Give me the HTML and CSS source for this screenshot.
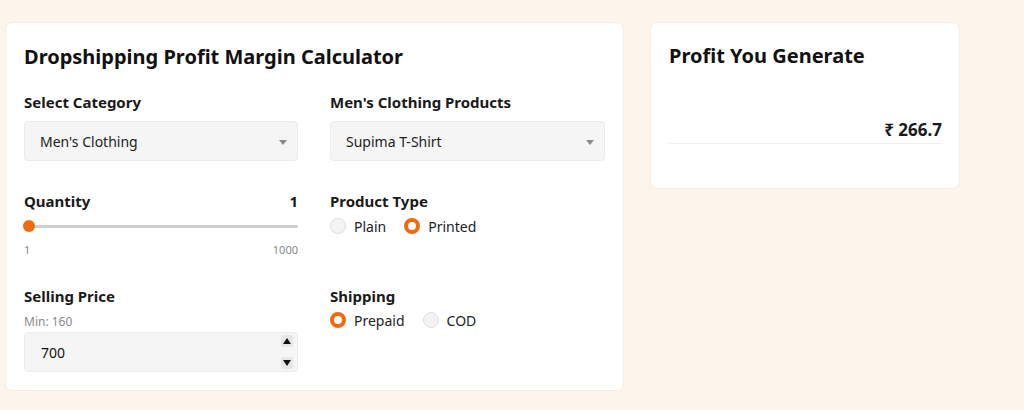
FILE: index.html
```html
<!DOCTYPE html>
<html lang="en">
<head>
<meta charset="utf-8">
<title>Dropshipping Profit Margin Calculator</title>
<link rel="stylesheet" href="styles.css">
</head>
<body>
<main class="page">
  <section class="card calc">
    <h1 class="title">Dropshipping Profit Margin Calculator</h1>
    <div class="grid">
      <div class="field r1 c1">
        <label class="label">Select Category</label>
        <div class="select"><span>Men's Clothing</span><i class="caret"></i></div>
      </div>
      <div class="field r1 c2">
        <label class="label">Men's Clothing Products</label>
        <div class="select"><span>Supima T-Shirt</span><i class="caret"></i></div>
      </div>
      <div class="field r2 c1">
        <div class="label-row"><span class="label">Quantity</span><span class="label">1</span></div>
        <div class="slider"><span class="track"></span><span class="thumb"></span></div>
        <div class="range-ends"><span>1</span><span>1000</span></div>
      </div>
      <div class="field r2 c2">
        <span class="label">Product Type</span>
        <div class="radios">
          <span class="radio"><i class="dot"></i>Plain</span>
          <span class="radio"><i class="dot on"></i>Printed</span>
        </div>
      </div>
      <div class="field r3 c1">
        <span class="label">Selling Price</span>
        <span class="hint">Min: 160</span>
        <div class="number">
          <span>700</span>
          <span class="spin"><i class="btn up"></i><i class="btn down"></i></span>
        </div>
      </div>
      <div class="field r3 c2">
        <span class="label">Shipping</span>
        <div class="radios ship">
          <span class="radio"><i class="dot on"></i>Prepaid</span>
          <span class="radio"><i class="dot"></i>COD</span>
        </div>
      </div>
    </div>
  </section>
  <section class="card result">
    <h2 class="title">Profit You Generate</h2>
    <div class="amount">₹ 266.7</div>
  </section>
</main>
</body>
</html>
```
FILE: styles.css
```css
* { box-sizing: border-box; }
html, body { margin: 0; padding: 0; }
body {
  background: #fdf4eb;
  font-family: "Noto Sans", "DejaVu Sans", sans-serif;
  color: #111;
  height: 410px;
  overflow: hidden;
}
.page {
  display: flex;
  align-items: flex-start;
  gap: 28px;
  padding: 23px 0 0 6px;
}
.card {
  background: #fff;
  border-radius: 6px;
  box-shadow: 0 0 0 1px #f6ece2;
}
.calc {
  width: 617px;
  padding: 20px 18px 18px;
}
.title {
  margin: 0;
  font-size: 20px;
  font-weight: 700;
  line-height: 28px;
  color: #111;
}
.calc .title { margin-bottom: 21px; }
.grid {
  display: grid;
  grid-template-columns: 274px 275px;
  column-gap: 32px;
  row-gap: 30px;
}
.r1 { grid-row: 1; } .r2 { grid-row: 2; } .r3 { grid-row: 3; }
.c1 { grid-column: 1; } .c2 { grid-column: 2; }
.field { display: flex; flex-direction: column; }
.label {
  font-size: 15px;
  font-weight: 700;
  line-height: 20px;
  color: #1a1a1a;
}
.label-row { display: flex; justify-content: space-between; }
.select {
  margin-top: 9px;
  height: 40px;
  background: #f5f5f5;
  border: 1px solid #ebebeb;
  border-radius: 4px;
  display: flex;
  align-items: center;
  justify-content: space-between;
  padding: 0 10px 0 15px;
  font-size: 14px;
  color: #222;
}
.caret {
  width: 0; height: 0;
  border-left: 4px solid transparent;
  border-right: 4px solid transparent;
  border-top: 5px solid #8a8a8a;
  margin-top: 2px;
}
.slider {
  position: relative;
  height: 16px;
  margin-top: 7px;
  display: flex;
  align-items: center;
}
.track {
  flex: 1;
  height: 3px;
  background: #cfcfcf;
  border-radius: 2px;
}
.thumb {
  position: absolute;
  left: -1px;
  top: 2px;
  width: 12px; height: 12px;
  border-radius: 50%;
  background: #f26a10;
}
.range-ends {
  margin-top: 10px;
  display: flex;
  justify-content: space-between;
  font-size: 11px;
  line-height: 12px;
  color: #888;
}
.radios {
  margin-top: 7px;
  display: flex;
  gap: 18px;
  height: 16px;
  align-items: center;
}
.radios.ship { margin-top: 6px; }
.radio {
  display: flex;
  align-items: center;
  gap: 8px;
  font-size: 14px;
  color: #222;
}
.dot {
  width: 16px; height: 16px;
  border-radius: 50%;
  background: #f3f3f3;
  border: 1px solid #dedede;
}
.dot.on {
  background: #fff;
  border: 4px solid #f26a10;
}
.hint {
  margin-top: 9px;
  font-size: 12px;
  line-height: 14px;
  color: #8a8a8a;
}
.number {
  margin-top: 3px;
  height: 40px;
  background: #f5f5f5;
  border: 1px solid #ebebeb;
  border-radius: 4px;
  display: flex;
  align-items: center;
  justify-content: space-between;
  padding: 0 4px 0 16px;
  font-size: 14px;
  color: #111;
}
.spin {
  display: flex;
  flex-direction: column;
  justify-content: space-between;
  height: 34px;
}
.btn {
  width: 12px; height: 12px;
  background: #e6e6e6;
  border-radius: 2px;
  position: relative;
}
.btn::after {
  content: "";
  position: absolute;
  left: 2px;
  width: 0; height: 0;
  border-left: 4px solid transparent;
  border-right: 4px solid transparent;
}
.btn.up::after { top: 3px; border-bottom: 6px solid #111; }
.btn.down::after { top: 3px; border-top: 6px solid #111; }
.result {
  width: 308px;
  padding: 19px 17px 44px 18px;
}
.amount {
  margin-top: 50px;
  text-align: right;
  font-size: 17px;
  font-weight: 700;
  line-height: 20px;
  padding-bottom: 3px;
  border-bottom: 1px solid #f0f0f0;
  color: #1a1a1a;
}
```
